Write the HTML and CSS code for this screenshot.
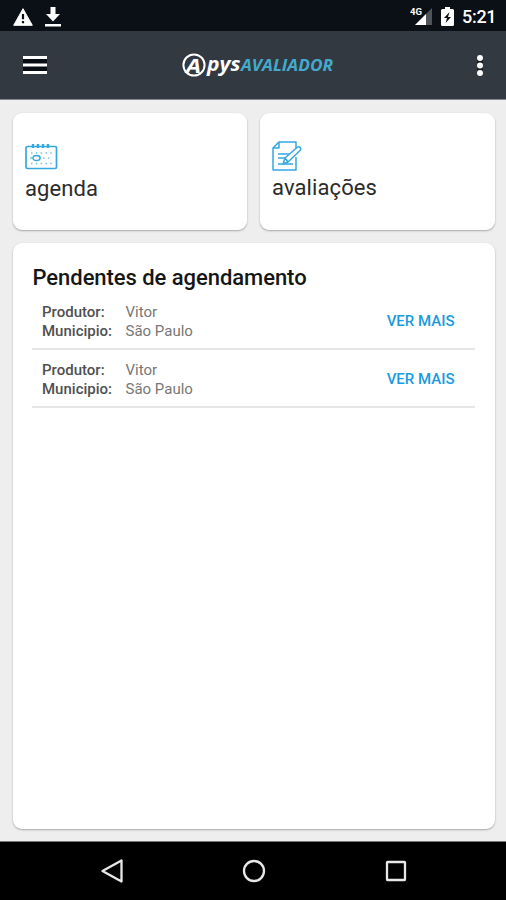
FILE: index.html
```html
<!DOCTYPE html>
<html lang="pt-BR">
<head>
<meta charset="utf-8">
<title>Apys Avaliador</title>
<link rel="stylesheet" href="styles.css">
</head>
<body>
<div class="screen">
  <div class="status">
    <div class="status-group">
      <svg width="20" height="18" viewBox="0 0 20 18"><path d="M10 .7 19.3 17.3H.7Z" fill="#fff" stroke="#fff" stroke-linejoin="round"/><path d="M10 6v5.200M10 13v2.200" stroke="#0b0f16" stroke-width="2.200"/></svg>
      <svg class="download" width="16" height="20" viewBox="0 0 16 20"><path d="M5.500 0h5v7H15l-7 7.500L1 7h4.500zM0 17h16v2.600H0z" fill="#fff"/></svg>
    </div>
    <div class="status-group">
      <svg width="23" height="19" viewBox="0 0 23 19"><path d="M22 1v17H5z" fill="#50545a"/><path d="M16 7v11H5z" fill="#fff"/><text class="net" x="0" y="8" textLength="12" lengthAdjust="spacingAndGlyphs">4G</text></svg>
      <svg class="battery" width="13" height="19" viewBox="0 0 13 19"><path d="M4 0h5v2h2.500Q13 2 13 3.500v14Q13 19 11.500 19h-10Q0 19 0 17.500v-14Q0 2 1.500 2H4z" fill="#fff"/><path d="M8.500 5 3 11h3l-1.300 5L10 10H7z" fill="#0b0f16"/></svg>
      <span class="clock">5:21</span>
    </div>
  </div>
  <header class="appbar">
    <svg width="26" height="22" viewBox="0 0 26 22"><path d="M1 2h24v18H1z" fill="#080d14"/><path d="M1 3.500h24M1 11h24M1 18.500h24" stroke="#fff" stroke-width="3.200"/></svg>
    <svg class="logo" width="154" height="28" viewBox="0 0 154 28">
      <circle cx="13" cy="14" r="10.600" fill="none" stroke="#fff" stroke-width="2"/>
      <text class="logo-a" x="5" y="21.500" textLength="15" lengthAdjust="spacingAndGlyphs">A</text>
      <text class="logo-pys" x="26" y="19.500" textLength="33.500" lengthAdjust="spacingAndGlyphs">pys</text>
      <text class="logo-name" x="60" y="19.500" textLength="92" lengthAdjust="spacingAndGlyphs">AVALIADOR</text>
    </svg>
    <svg class="more" width="8" height="24" viewBox="0 0 8 24"><path d="M1 3h6v18H1z" fill="#171c22"/><g fill="#fff"><circle cx="4" cy="5" r="3"/><circle cx="4" cy="12.500" r="3"/><circle cx="4" cy="20" r="3"/></g></svg>
  </header>
  <main class="content">
    <div class="tiles">
      <section class="card tile">
        <svg width="33" height="30" viewBox="0 0 33 30" fill="none" stroke="#35a8e0"><rect x="1" y="5.500" width="30.500" height="22" rx="1.500" stroke-width="1.700"/><path d="M8 3v4M13 3v4M18 3v4M23 3v4" stroke-width="2.400"/><path d="M6 12h21M18 17h9M6 22.500h21" stroke-width="1.500" stroke-dasharray="1.500 3.300" opacity=".7"/><ellipse cx="11.500" cy="17" rx="3.500" ry="2.500" stroke-width="1.300"/><path d="M5 17h3M13 14.500l2 1v3l-2 1"/></svg>
        <span class="tile-label agenda">agenda</span>
      </section>
      <section class="card tile">
        <svg width="30" height="30" viewBox="0 0 30 30" fill="none" stroke="#35a8e0" stroke-width="1.500" stroke-linejoin="round"><path d="M24 7V1H7L1 7v22h23V16M7 1v6H1M6 13h11M6 17h7M6 23h15"/><path d="m11 23 2-6L25 6.500q2-1.500 3.200 0t-.2 3L16 21zM13 17l3 4" fill="#fff"/></svg>
        <span class="tile-label">avaliações</span>
      </section>
    </div>
    <section class="card pending">
      <h1>Pendentes de agendamento</h1>
      <div class="row">
        <dl><dt>Produtor:</dt><dd>Vitor</dd><dt>Municipio:</dt><dd>São Paulo</dd></dl>
        <a class="link">VER MAIS</a>
      </div>
      <div class="row">
        <dl><dt>Produtor:</dt><dd>Vitor</dd><dt>Municipio:</dt><dd>São Paulo</dd></dl>
        <a class="link">VER MAIS</a>
      </div>
    </section>
  </main>
  <nav class="navbar">
    <svg width="24" height="26" viewBox="0 0 24 26"><path d="M21.500 2.500v21L2.500 13z"/></svg>
    <svg width="24" height="26" viewBox="0 0 24 26"><circle cx="12" cy="13" r="10"/></svg>
    <svg width="24" height="26" viewBox="0 0 24 26"><rect x="3" y="4" width="18" height="18" rx=".5"/></svg>
  </nav>
</div>
</body>
</html>
```
FILE: styles.css
```css
* { box-sizing: border-box; }
body { margin: 0; font-family: Roboto, "Liberation Sans", sans-serif; }
svg { display: block; flex: none; }
.screen { width: 506px; height: 900px; display: flex; flex-direction: column; background: #eee; overflow: hidden; }
.status { height: 31px; flex: none; display: flex; justify-content: space-between; align-items: center; padding: 2px 10px 0 13px; background: #0b0f16; }
.status-group { display: flex; align-items: center; }
.download { margin-left: 12px; }
.net { font: 700 9px Roboto, sans-serif; fill: #fff; }
.battery { margin-left: 8px; }
.clock { width: 34px; margin-left: 8px; color: #fff; font-size: 18px; font-weight: 500; line-height: 20px; letter-spacing: -.3px; white-space: nowrap; }
.appbar { height: 69px; flex: none; display: flex; align-items: center; justify-content: space-between; padding: 0 22px 0 22px; background: #333941; border-bottom: 1px solid #85898d; }
.logo { margin-right: 9px; }
.logo text { font-family: "Open Sans", sans-serif; font-style: italic; font-weight: 700; fill: #fff; }
.logo .logo-a { font-size: 20px; }
.logo .logo-pys { font-size: 20px; }
.logo .logo-name { font-size: 16px; fill: #43aacb; }
.content { flex: 1; display: flex; flex-direction: column; gap: 13px; padding: 13px 11px 12px 13px; }
.tiles { display: grid; grid-template-columns: 234px 235px; gap: 13px; height: 117px; }
.card { background: #fff; border-radius: 9px; box-shadow: 0 1px 2px rgba(0, 0, 0, .3); }
.tile { padding: 28px 12px; display: flex; flex-direction: column; }
.tile-label { margin-top: 4px; font-size: 22px; line-height: 26px; letter-spacing: .1px; color: #2b2b2b; }
.agenda { margin-top: 5px; }
.pending { flex: 1; padding: 21px 20px 21px 19px; }
h1 { margin: 0 0 11px .5px; font-size: 22px; font-weight: 500; line-height: 28px; color: #161616; white-space: nowrap; letter-spacing: -.05px; }
.row { height: 58px; display: flex; justify-content: space-between; padding: 11px 20.5px 0 10px; border-bottom: 2px solid #e6e6e6; }
.row:first-of-type { height: 47px; padding-top: 0; }
dl { margin: 0; display: grid; grid-template-columns: 83.5px auto; grid-auto-rows: 19px; align-content: start; font-size: 15px; line-height: 19px; }
dt { color: #505050; font-weight: 500; }
dd { margin: 0; color: #777; }
.link { margin-top: 8px; height: 20px; font-size: 15px; line-height: 20px; font-weight: 500; color: #199be0; }
.navbar { height: 59px; flex: none; display: flex; justify-content: space-between; align-items: center; padding: 0 98px 0 100px; background: #000; border-top: 1px solid #777; }
.navbar svg { fill: none; stroke: #e8e8e8; stroke-width: 2.300; stroke-linejoin: round; }
```
